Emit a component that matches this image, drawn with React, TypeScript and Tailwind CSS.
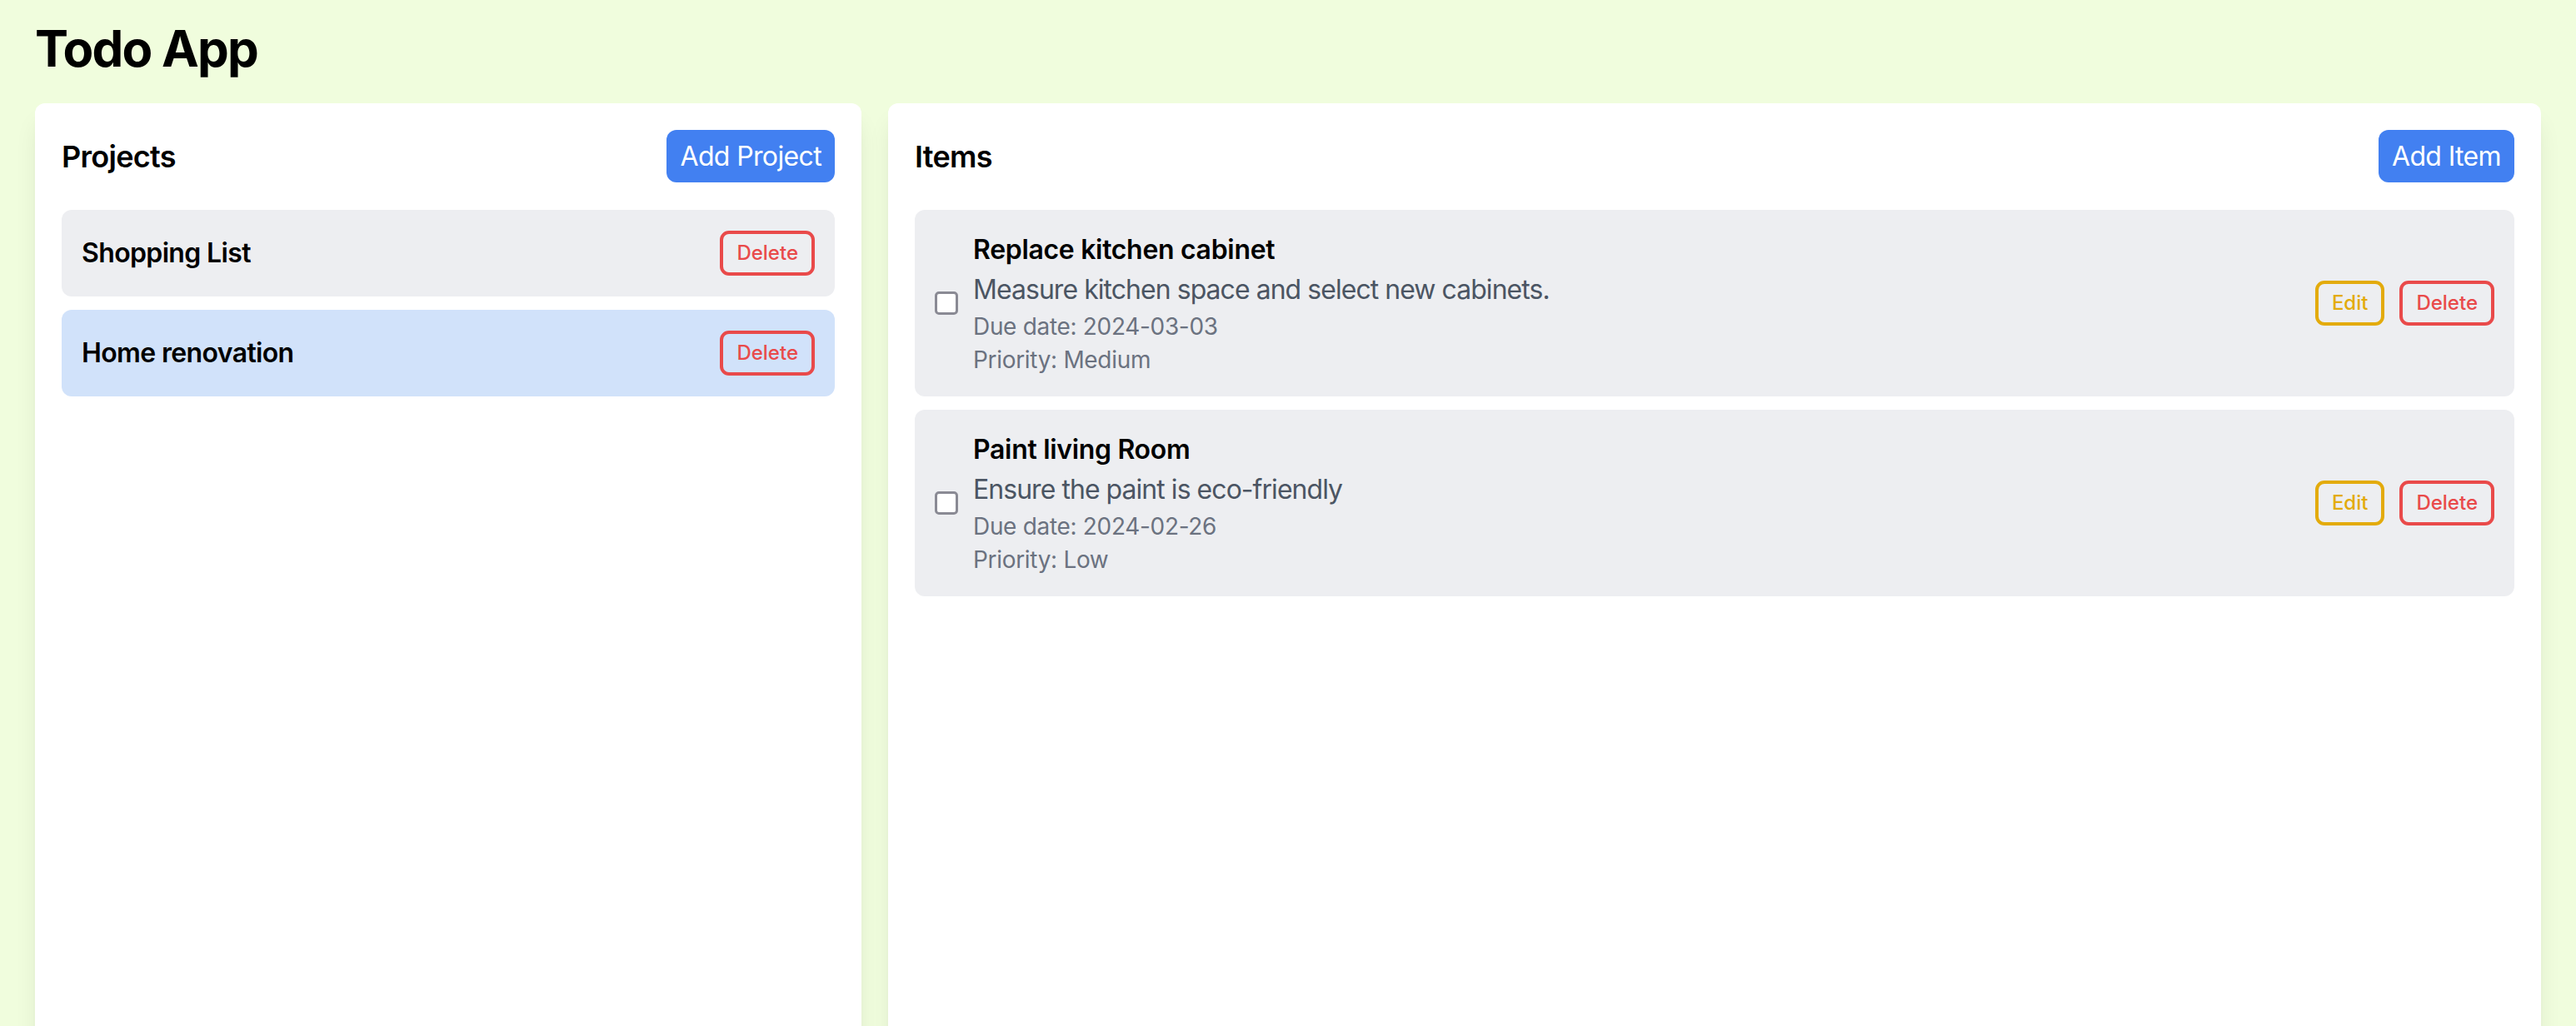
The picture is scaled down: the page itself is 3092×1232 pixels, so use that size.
import React from 'react';

interface Project {
  id: number;
  name: string;
}

interface Item {
  id: number;
  title: string;
  description: string;
  dueDate: string;
  priority: string;
}

const projects: Project[] = [
  { id: 1, name: 'Shopping List' },
  { id: 2, name: 'Home renovation' },
];

const items: Item[] = [
  {
    id: 1,
    title: 'Replace kitchen cabinet',
    description: 'Measure kitchen space and select new cabinets.',
    dueDate: '2024-03-03',
    priority: 'Medium',
  },
  {
    id: 2,
    title: 'Paint living Room',
    description: 'Ensure the paint is eco-friendly',
    dueDate: '2024-02-26',
    priority: 'Low',
  },
];

const selectedProject = 2;

const panel =
  'h-[1200px] rounded-[12px] bg-white p-[32px] shadow-[0_20px_30px_-6px_rgba(0,0,0,0.1),0_8px_12px_-8px_rgba(0,0,0,0.1)]';

const App: React.FC = () => {
  return (
    <div className="h-screen overflow-hidden bg-[#f0fddd] font-['Inter','Noto_Sans',sans-serif] text-black">
      <div className="mx-auto w-[3072px] px-[32px] pt-[22px]">
        <h1 className="text-[60px] leading-[72px] font-bold tracking-[-0.03em]">Todo App</h1>

        <div className="mt-[30px] flex gap-[32px]">
          {/* projects */}
          <section className={`w-[992px] shrink-0 ${panel}`}>
            <div className="mb-[33px] flex items-center justify-between">
              <h2 className="text-[36px] leading-[56px] font-semibold tracking-[-0.02em]">Projects</h2>
              <button className="h-[63px] rounded-[12px] bg-[#4280f1] px-[16px] text-[32px] leading-[48px] tracking-[-0.02em] text-white">
                Add Project
              </button>
            </div>
            <div className="flex flex-col gap-[16px]">
              {projects.map((p) => (
                <div
                  key={p.id}
                  className={`flex h-[104px] items-center justify-between rounded-[12px] px-[24px] ${
                    p.id === selectedProject ? 'bg-[#d1e2fa]' : 'bg-[#edeef1]'
                  }`}
                >
                  <span className="text-[32px] leading-[48px] font-semibold tracking-[-0.02em]">{p.name}</span>
                  <button className="h-[54px] rounded-[11px] border-[4px] border-[#e94a4a] px-[16px] text-[24px] leading-[32px] font-medium text-[#e94a4a]">
                    Delete
                  </button>
                </div>
              ))}
            </div>
          </section>

          {/* items */}
          <section className={`min-w-0 flex-1 ${panel}`}>
            <div className="mb-[33px] flex items-center justify-between">
              <h2 className="text-[36px] leading-[56px] font-semibold tracking-[-0.02em]">Items</h2>
              <button className="h-[63px] rounded-[12px] bg-[#4280f1] px-[16px] text-[32px] leading-[48px] tracking-[-0.02em] text-white">
                Add Item
              </button>
            </div>
            <div className="flex flex-col gap-[16px]">
              {items.map((it) => (
                <div
                  key={it.id}
                  className="flex items-center justify-between rounded-[12px] bg-[#edeef1] p-[24px]"
                >
                  <div className="flex items-center">
                    <span className="mr-[18px] block h-[28px] w-[28px] rounded-[5px] border-[3px] border-[#8a8a94] bg-white" />
                    <div className="tracking-[-0.02em]">
                      <h3 className="text-[32px] leading-[48px] font-semibold">{it.title}</h3>
                      <p className="text-[32px] leading-[48px] tracking-[-0.03em] text-[#4b5563]">{it.description}</p>
                      <p className="text-[28px] leading-[40px] text-[#6b7280]">Due date: {it.dueDate}</p>
                      <p className="text-[28px] leading-[40px] text-[#6b7280]">Priority: {it.priority}</p>
                    </div>
                  </div>
                  <div className="flex gap-[18px]">
                    <button className="h-[54px] rounded-[11px] border-[4px] border-[#e3ab0c] px-[16px] text-[24px] leading-[32px] font-medium text-[#e3ab0c]">
                      Edit
                    </button>
                    <button className="h-[54px] rounded-[11px] border-[4px] border-[#e94a4a] px-[16px] text-[24px] leading-[32px] font-medium text-[#e94a4a]">
                      Delete
                    </button>
                  </div>
                </div>
              ))}
            </div>
          </section>
        </div>
      </div>
    </div>
  );
};

export default App;
